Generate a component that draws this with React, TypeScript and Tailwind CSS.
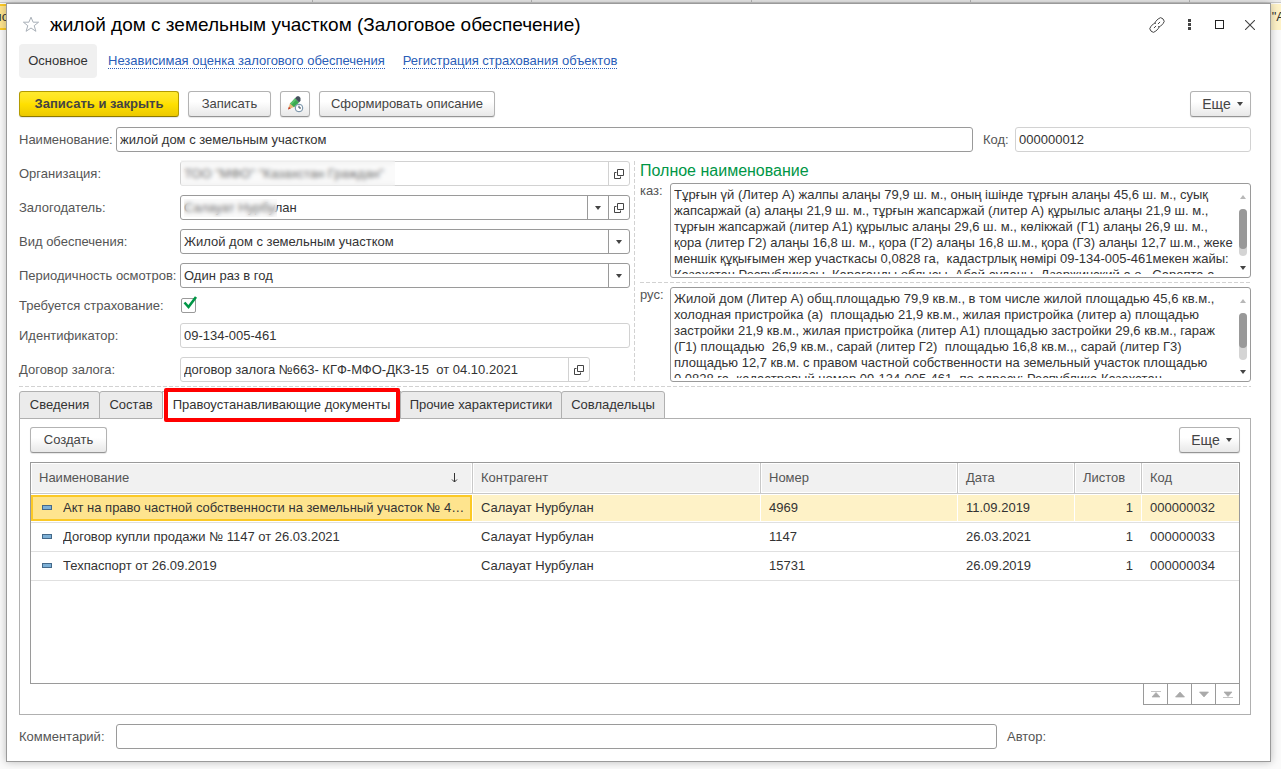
import type { ReactNode } from "react";
import clsx from "clsx";

const kaz = `Тұрғын үй (Литер А) жалпы алаңы 79,9 ш. м., оның ішінде тұрғын алаңы 45,6 ш. м., суық
жапсаржай (а) алаңы 21,9 ш. м., тұрғын жапсаржай (литер А) құрылыс алаңы 21,9 ш. м.,
тұрғын жапсаржай (литер А1) құрылыс алаңы 29,6 ш. м., көлікжай (Г1) алаңы 26,9 ш. м.,
қора (литер Г2) алаңы 16,8 ш. м., қора (Г2) алаңы 16,8 ш.м., қора (Г3) алаңы 12,7 ш.м., жеке
меншік құқығымен жер участкасы 0,0828 га,  кадастрлық нөмірі 09-134-005-461мекен жайы:
Казахстан Республикасы, Караганды облысы, Абай ауданы, Дзержинский а.о., Сарепта а.`;

const rus = `Жилой дом (Литер А) общ.площадью 79,9 кв.м., в том числе жилой площадью 45,6 кв.м.,
холодная пристройка (а)  площадью 21,9 кв.м., жилая пристройка (литер а) площадью
застройки 21,9 кв.м., жилая пристройка (литер А1) площадью застройки 29,6 кв.м., гараж
(Г1) площадью  26,9 кв.м., сарай (литер Г2)  площадью 16,8 кв.м.,, сарай (литер Г3)
площадью 12,7 кв.м. с правом частной собственности на земельный участок площадью
0,0828 га, кадастровый номер 09-134-005-461, по адресу: Республика Казахстан,`;

const documents = [
  { name: "Акт на право частной собственности на земельный участок № 4…", party: "Салауат Нурбулан", number: "4969", date: "11.09.2019", sheets: 1, code: "000000032" },
  { name: "Договор купли продажи № 1147 от 26.03.2021", party: "Салауат Нурбулан", number: "1147", date: "26.03.2021", sheets: 1, code: "000000033" },
  { name: "Техпаспорт от 26.09.2019", party: "Салауат Нурбулан", number: "15731", date: "26.09.2019", sheets: 1, code: "000000034" },
];

const tabs = [
  { name: "Сведения", width: "w-[81px]" },
  { name: "Состав", width: "w-[64px]" },
  { name: "Правоустанавливающие документы", width: "w-[239px]", active: true },
  { name: "Прочие характеристики", width: "w-[162px]" },
  { name: "Совладельцы", width: "w-[104px]" },
];

const dashX = "h-px bg-[repeating-linear-gradient(90deg,#d2d2d2_0_4px,transparent_4px_6px)]";
const dashY = "w-px bg-[repeating-linear-gradient(180deg,#d2d2d2_0_4px,transparent_4px_6px)]";

function Caret({ up = false, className = "text-[#444]" }: { up?: boolean; className?: string }) {
  return (
    <svg viewBox="0 0 6 4" className={clsx("h-1 w-1.5 shrink-0", className)} fill="currentColor">
      <path d={up ? "M0 4h6L3 0z" : "M0 0h6L3 4z"} />
    </svg>
  );
}

function OpenIcon() {
  return (
    <svg viewBox="0 0 10 10" className="h-2.5 w-2.5" fill="none" stroke="#444">
      <path d="M3.5.5h6v6h-6z" />
      <path d="M2.5 3.5h-2v6h6v-2" />
    </svg>
  );
}

function Button({ children, className }: { children: ReactNode; className?: string }) {
  return (
    <button
      type="button"
      className={clsx(
        "flex h-[26px] items-center justify-center rounded-[3px] border border-[#b3b3b3] border-b-[#959595] bg-linear-to-b from-white from-40% to-[#e8e8e8] text-[#444] shadow-[0_1px_1px_#0000001a]",
        className,
      )}
    >
      {children}
    </button>
  );
}

function MoreButton() {
  return (
    <Button className="w-[61px] gap-1.5 pl-1">
      <span className="text-sm">Еще</span>
      <Caret />
    </Button>
  );
}

function Row({ id, label, children }: { id: string; label: string; children: ReactNode }) {
  return (
    <div className="flex h-[25px] items-center">
      <label htmlFor={id} className="w-[161px] shrink-0 whitespace-nowrap text-[#555]">
        {label}
      </label>
      {children}
    </div>
  );
}

type FieldProps = {
  id: string;
  value: string;
  options?: boolean;
  dark?: boolean;
  drop?: boolean;
  open?: boolean;
  className?: string;
  children?: ReactNode;
};

function Field({ id, value, options, dark, drop, open, className = "flex-1", children }: FieldProps) {
  const line = dark ? "border-[#9a9a9a]" : "border-[#d2d2d2]";
  const side = clsx("flex w-[21px] shrink-0 items-center justify-center border-l", line);
  return (
    <div className={clsx("relative flex h-[25px] min-w-0 rounded-[3px] border bg-white", line, className)}>
      {options ? (
        <select id={id} defaultValue={value} className="min-w-0 flex-1 appearance-none bg-transparent pl-[3px] outline-none">
          <option>{value}</option>
        </select>
      ) : (
        <input id={id} defaultValue={value} className="min-w-0 flex-1 bg-transparent pl-[3px] outline-none" />
      )}
      {drop && (
        <button type="button" aria-label="Выбрать" className={side}>
          <Caret />
        </button>
      )}
      {open && (
        <button type="button" aria-label="Открыть" className={side}>
          <OpenIcon />
        </button>
      )}
      {children}
    </div>
  );
}

function LongText({ id, label, value, thumb }: { id: string; label: string; value: string; thumb: string }) {
  return (
    <div className="flex">
      <label htmlFor={id} className="w-[30px] shrink-0 text-[#555]">
        {label}
      </label>
      <div className="flex h-[95px] min-w-0 flex-1 rounded-[3px] border border-[#9a9a9a] py-[3px] pl-[3px]">
        <textarea
          id={id}
          defaultValue={value}
          className="min-w-0 flex-1 resize-none overflow-hidden whitespace-pre bg-transparent leading-4 outline-none"
        />
        <div className="flex w-[15px] flex-col items-center justify-between py-1">
          <Caret up className="mt-1 text-[#b8b8b8]" />
          <div className="h-[47px] w-2 rounded bg-[#d4d4d4]">
            <div className={clsx("rounded bg-[#999]", thumb)} />
          </div>
          <Caret />
        </div>
      </div>
    </div>
  );
}

function Th({ children, last }: { children: ReactNode; last?: boolean }) {
  return (
    <th className={clsx("h-[31px] border-b border-[#c8c8c8] p-px font-normal", !last && "border-r")}>
      <div className="flex h-7 items-center justify-between bg-[#f1f1f1] px-[7px] text-[#555]">{children}</div>
    </th>
  );
}

function Td({ children, selected, focus, right, last }: { children: ReactNode; selected: boolean; focus?: boolean; right?: boolean; last?: boolean }) {
  return (
    <td className="h-[29px] border-b border-[#e0e0e0] p-0">
      <div
        className={clsx(
          "flex h-[26px] items-center",
          !last && "mr-px",
          right && "justify-end",
          focus && selected ? "border-2 border-[#fbc926] bg-[#fee48e] pl-1.5" : "px-2",
          selected && !focus && "bg-[#fef2c7]",
        )}
      >
        {children}
      </div>
    </td>
  );
}

function DocumentsTable() {
  return (
    <table className="w-full table-fixed border-separate border-spacing-0 text-left">
      <colgroup>
        <col className="w-[442px]" />
        <col className="w-[288px]" />
        <col className="w-[197px]" />
        <col className="w-[117px]" />
        <col className="w-[67px]" />
        <col className="w-[97px]" />
      </colgroup>
      <thead>
        <tr>
          <Th>
            Наименование
            <svg viewBox="0 0 7 10" className="mr-1.5 h-2.5 w-[7px]" fill="none" stroke="#333">
              <path d="M3.5 0v9M1 6.5l2.5 2.5L6 6.5" />
            </svg>
          </Th>
          <Th>Контрагент</Th>
          <Th>Номер</Th>
          <Th>Дата</Th>
          <Th>Листов</Th>
          <Th last>Код</Th>
        </tr>
      </thead>
      <tbody>
        {documents.map((doc, i) => (
          <tr key={doc.code}>
            <Td selected={i === 0} focus>
              <span className="mr-[11px] mb-0.5 ml-[3px] h-[5px] w-2.5 shrink-0 border border-[#44698a] bg-[#7db0d6]" />
              <span className="truncate">{doc.name}</span>
            </Td>
            <Td selected={i === 0}>{doc.party}</Td>
            <Td selected={i === 0}>{doc.number}</Td>
            <Td selected={i === 0}>{doc.date}</Td>
            <Td selected={i === 0} right>{doc.sheets}</Td>
            <Td selected={i === 0} last>{doc.code}</Td>
          </tr>
        ))}
      </tbody>
    </table>
  );
}

const pagers = [
  { label: "В начало", d: "M0 .5h10M1 6h8L5 1.5z" },
  { label: "Вверх", d: "M.5 6h9L5 1z" },
  { label: "Вниз", d: "M.5 1h9L5 6z" },
  { label: "В конец", d: "M0 6.5h10M1 1h8L5 5.5z" },
];

function TitleBar() {
  return (
    <div className="flex h-[41px] items-center">
      <button type="button" aria-label="В избранное" className="ml-[3px]">
        <svg viewBox="0 0 18 17" className="h-[17px] w-[18px]" fill="none" stroke="#a9b0b8">
          <path d="M9 1.2l2.1 5h5.5l-4.4 3.5 1.7 5.6L9 12l-4.9 3.3 1.7-5.6L1.4 6.2h5.5z" />
        </svg>
      </button>
      <h1 className="ml-2.5 flex-1 text-[19px] text-black">жилой дом с земельным участком (Залоговое обеспечение)</h1>
      <div className="flex items-center text-[#444]">
        <button type="button" aria-label="Ссылка" className="mr-[23px]">
          <svg viewBox="0 0 16 16" className="h-4 w-4" fill="none" stroke="currentColor" strokeLinecap="round">
            <path d="M6 6.5a3 3 0 0 1 .8-2.2l2.4-2.4a3.3 3.3 0 0 1 4.8 0 3.3 3.3 0 0 1 0 4.8l-2.4 2.4a3 3 0 0 1-2 .8" />
            <path d="M10 9.5a3 3 0 0 1-.8 2.2l-2.4 2.4a3.3 3.3 0 0 1-4.8 0 3.3 3.3 0 0 1 0-4.8l2.4-2.4a3 3 0 0 1 2-.8" />
            <path d="M5.2 10.8l1.6-1.6M9.2 6.8l1.6-1.6" />
          </svg>
        </button>
        <button type="button" aria-label="Меню" className="mr-6">
          <svg viewBox="0 0 3 11" className="h-[11px] w-[3px]" fill="currentColor">
            <path d="M0 0h3v3H0zM0 4h3v3H0zM0 8h3v3H0z" />
          </svg>
        </button>
        <button type="button" aria-label="Развернуть" className="mr-[21px] h-[9px] w-[9px] border border-[#222]" />
        <button type="button" aria-label="Закрыть" className="-mr-1">
          <svg viewBox="0 0 10 10" className="h-2.5 w-2.5" stroke="currentColor" strokeWidth="1.1">
            <path d="M0 0l10 10M10 0L0 10" />
          </svg>
        </button>
      </div>
    </div>
  );
}

// the list window that stays partly visible behind the card
function Backdrop() {
  return (
    <div className="absolute inset-0 overflow-hidden bg-[#fafafa]" aria-hidden="true">
      <div className="flex h-[3px] justify-between border-b border-[#c8c8c8] bg-[#ebebeb]">
        <span className="ml-[312px] w-px bg-[#b8b8b8]" />
        <span className="w-px bg-[#b8b8b8]" />
        <span className="w-px bg-[#b8b8b8]" />
        <span className="w-px bg-[#b8b8b8]" />
        <span className="mr-[91px] w-px bg-[#b8b8b8]" />
      </div>
      <div className="mt-px flex h-[26px] text-[#333]">
        <span className="flex flex-1 items-center border-y-2 border-[#fbc926] bg-[#fee48e]">
          <span className="-ml-1.5">ло</span>
        </span>
        <span className="flex flex-1 items-center justify-end bg-[#fef2c7]">
          <span className="-mr-1">"А</span>
        </span>
      </div>
    </div>
  );
}

export default function App() {
  return (
    <div className="relative min-h-screen overflow-hidden pt-[3px] pr-2.5 pb-1.5 pl-1.5 font-['Liberation_Sans',Arial,sans-serif] text-[13px] leading-4 text-[#333]">
      <Backdrop />
      <main className="relative border border-[#9a9a9a] bg-white pr-[19px] pb-3 pl-3 shadow-[0_0_8px_#00000040]">
        <TitleBar />
        <nav className="-mt-px flex h-[34px] items-center">
          <a href="#main" className="flex h-[34px] w-[78px] items-center justify-center rounded bg-[#f0f0f0]">
            Основное
          </a>
          <a href="#valuation" className="ml-[11px] border-b border-dotted border-[#2a5db8] leading-[14px] text-[#2a5db8]">
            Независимая оценка залогового обеспечения
          </a>
          <a href="#insurance" className="ml-[18px] border-b border-dotted border-[#2a5db8] leading-[14px] text-[#2a5db8]">
            Регистрация страхования объектов
          </a>
        </nav>

        <div className="mt-[13px] flex">
          <button
            type="button"
            className="h-[26px] w-[160px] rounded-[3px] border border-[#b39b00] border-b-[#8d7a00] bg-linear-to-b from-[#ffea2e] via-[#ffe000] to-[#ecc900] font-bold text-[#444] shadow-[0_1px_1px_#0000001a]"
          >
            Записать и закрыть
          </button>
          <Button className="ml-[9px] w-[83px]">Записать</Button>
          <Button className="ml-[9px] w-[30px]">
            <svg viewBox="0 0 17 17" className="h-[17px] w-[17px]" role="img" aria-label="Изменить">
              <path d="M1 13.5l2.2-7 4.3 4.3z" fill="#e8b878" />
              <path d="M1 13.5l.9-2.8 1.9 1.7z" fill="#c0392b" />
              <path d="M3.2 7.5L8 2.2l4 4.3-5 4.8z" fill="#3cab50" />
              <path d="M3.2 7.5L8 2.2l1.3 1.5-4.8 5z" fill="#5bc46c" />
              <path d="M8 2.2L10 .3h2l1.5 1.8v2.6L12 6.5z" fill="#44505c" />
              <circle cx="12" cy="12" r="3.8" fill="#fff" stroke="#6d8ba3" />
              <path d="M12 9.7V12h2" fill="none" stroke="#345" />
            </svg>
          </Button>
          <Button className="ml-[9px] w-[176px]">Сформировать описание</Button>
          <div className="ml-auto">
            <MoreButton />
          </div>
        </div>

        <div className="mt-2.5 flex items-center">
          <label htmlFor="name" className="w-[97px] text-[#555]">Наименование:</label>
          <Field id="name" value="жилой дом с земельным участком" dark />
          <label htmlFor="code" className="ml-2.5 w-8 text-[#555]">Код:</label>
          <Field id="code" value="000000012" className="w-[236px]" />
        </div>

        <div className="mt-[9px] flex">
          <div className="flex flex-1 flex-col gap-[9px]">
            <Row id="org" label="Организация:">
              <Field id="org" value={'ТОО "МФО" "Казахстан Граждан"'} open>
                <span className="absolute -top-0.5 left-0 h-[26px] w-[214px] bg-[#f0f0f0]/30 backdrop-blur-[2px]" />
              </Field>
            </Row>
            <Row id="pledger" label="Залогодатель:">
              <Field id="pledger" value="Салауат Нурбулан" dark drop open>
                <span className="absolute top-[3px] left-[3px] h-[18px] w-[93px] bg-[#f0f0f0]/30 backdrop-blur-[2px]" />
              </Field>
            </Row>
            <Row id="kind" label="Вид обеспечения:">
              <Field id="kind" value="Жилой дом с земельным участком" options dark drop />
            </Row>
            <Row id="period" label="Периодичность осмотров:">
              <Field id="period" value="Один раз в год" options dark drop />
            </Row>
            <div className="flex h-[17px] items-center">
              <label htmlFor="insured" className="w-[162px] text-[#555]">Требуется страхование:</label>
              <span className="relative h-[15px] w-[15px]">
                <input
                  id="insured"
                  type="checkbox"
                  defaultChecked
                  className="peer block h-[15px] w-[15px] appearance-none rounded-xs border border-[#9a9a9a] bg-white"
                />
                <svg
                  viewBox="0 0 15 15"
                  className="pointer-events-none absolute -top-0.5 left-0.5 hidden h-[15px] w-[15px] peer-checked:block"
                  fill="none"
                  stroke="#009646"
                  strokeWidth="2.6"
                >
                  <path d="M1.5 6.5l4 4.5L13 1" />
                </svg>
              </span>
            </div>
            <Row id="ident" label="Идентификатор:">
              <Field id="ident" value="09-134-005-461" />
            </Row>
            <Row id="contract" label="Договор залога:">
              <Field id="contract" value="договор залога №663- КГФ-МФО-ДКЗ-15  от 04.10.2021" open className="w-[410px]" />
            </Row>
          </div>

          <div className={clsx("mr-[5px] ml-1", dashY)} />

          <section className="flex-1">
            <h2 className="h-[22px] text-base leading-5 text-[#009646]">Полное наименование</h2>
            <LongText id="kaz" label="каз:" value={kaz} thumb="h-10" />
            <div className={clsx("my-1", dashX)} />
            <LongText id="rus" label="рус:" value={rus} thumb="h-[35px]" />
          </section>
        </div>

        <div className={clsx("mt-1", dashX)} />

        <div role="tablist" className="relative mt-1 flex">
          {tabs.map((tab, i) => (
            <button
              key={tab.name}
              type="button"
              role="tab"
              aria-selected={!!tab.active}
              className={clsx(
                "relative h-7 shrink-0 whitespace-nowrap border border-[#b0b0b0]",
                tab.width,
                i > 0 && "-ml-px",
                tab.active ? "border-b-white bg-white" : "rounded-t-[3px] bg-[#ebebeb]",
              )}
            >
              {tab.name}
              {tab.active && <span className="absolute -top-1 left-px z-10 h-[34px] w-[236px] rounded-xs border-4 border-[#ff0000]" />}
            </button>
          ))}
        </div>

        <section className="-mt-px border border-[#b0b0b0] px-2.5 pt-2 pb-[9px]">
          <div className="flex justify-between">
            <Button className="w-[77px]">Создать</Button>
            <MoreButton />
          </div>
          <div className="mt-[9px] min-h-[222px] border border-[#9a9a9a]">
            <DocumentsTable />
          </div>
          <div className="-mt-px flex justify-end">
            {pagers.map((pager) => (
              <button
                key={pager.label}
                type="button"
                aria-label={pager.label}
                className="-ml-px flex h-[22px] w-[25px] items-center justify-center border border-[#9a9a9a]"
              >
                <svg viewBox="0 0 10 7" className="h-[7px] w-2.5" fill="#aaa" stroke="#aaa" strokeWidth=".7">
                  <path d={pager.d} />
                </svg>
              </button>
            ))}
          </div>
        </section>

        <div className="mt-[9px] flex items-center">
          <label htmlFor="comment" className="w-[97px] text-[#555]">Комментарий:</label>
          <Field id="comment" value="" dark />
          <span className="ml-2.5 w-[244px] text-[#555]">Автор:</span>
        </div>
      </main>
    </div>
  );
}
